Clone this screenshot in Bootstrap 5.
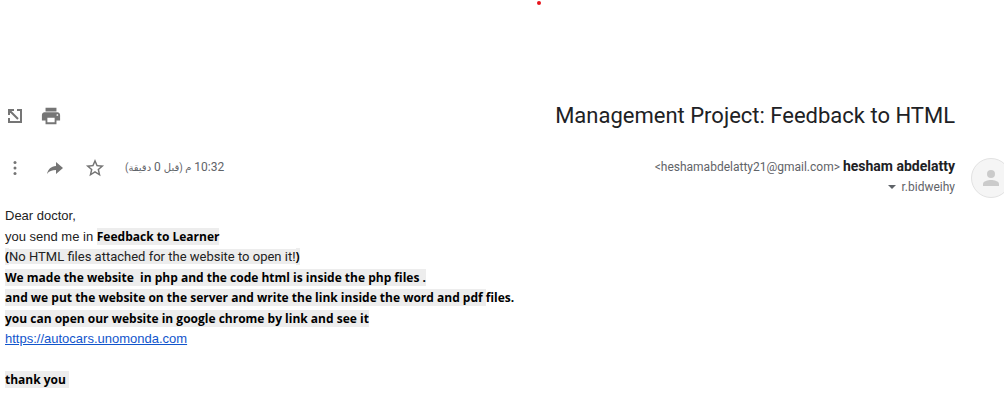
<!DOCTYPE html>
<html lang="en">
<head>
<meta charset="utf-8">
<meta name="viewport" content="width=device-width, initial-scale=1">
<title>Management Project: Feedback to HTML</title>
<link href="https://cdn.jsdelivr.net/npm/bootstrap@5.3.0/dist/css/bootstrap.min.css" rel="stylesheet">
<style>
body { font-family: Roboto, "Liberation Sans", sans-serif; color: #222; background: #fff; }
.top-strip { height: 94px; }
.rec-dot { width: 4px; height: 4px; margin: 1px 0 0 53.5%; background: #e8131c; }
.icon-btn { border: 0; padding: 0; background: none; width: 20px; height: 20px; color: #757575; display: block; }
.icon-btn svg { display: block; }
.tools { gap: 16px; padding-left: 5px; }
.actions { gap: 20px; }
.subject { font-size: 22px; line-height: 28px; color: #202124; }
.title-row { padding: 8px 49px 0 0; }
.meta-row { padding-top: 27px; }
.stamp { font: 12px/20px Roboto, "DejaVu Sans", sans-serif; color: #5f6368; }
.stamp span { font-size: 10px; }
.sender { line-height: 20px; height: 20px; font-size: 12px; color: #5f6368; }
.sender-name { font-size: 14px; line-height: 18px; color: #202124; }
.recipient { border: 0; padding: 0; background: none; font-size: 12px; line-height: 20px; color: #5f6368; }
.avatar { width: 40px; height: 40px; margin: 1px -7px 0 16px; border: 1px solid #e2e2e2; background: #f5f5f5; }
.message { padding: 8px 5px 20px; font: 13px/20px "Liberation Sans", Arial, sans-serif; }
.message p { margin: 0; min-height: 20px; white-space: pre-wrap; }
.message p:nth-child(even) { min-height: 21px; line-height: 21px; }
.message b { font: bold 12px/20px "Open Sans", "Noto Sans", sans-serif; color: #000; }
.hl { background: #ededed; }
.quoted { font: 13px/20px Roboto, sans-serif; }
.message a { color: #1155cc; }
</style>
</head>
<body class="overflow-hidden">
<div class="top-strip overflow-hidden"><div class="rec-dot rounded-circle"></div></div>
<main>
  <header>
    <div class="title-row d-flex justify-content-between align-items-center">
      <div class="tools d-flex">
        <button class="icon-btn" aria-label="Open in new window"><svg width="20" height="20" viewBox="0 0 20 20" fill="none" stroke="currentColor" stroke-width="2"><path d="M12 4h4v12H4v-4M4 9V4h5M4 4l9 9"/></svg></button>
        <button class="icon-btn" aria-label="Print"><svg width="20" height="20" viewBox="1 1 22 22" fill="currentColor"><path d="M19 8H5c-1.660 0-3 1.340-3 3v6h4v4h12v-4h4v-6c0-1.660-1.340-3-3-3zm-3 11H8v-5h8v5zm3-7c-.55 0-1-.45-1-1s.45-1 1-1 1 .45 1 1-.45 1-1 1zm-1-9H6v4h12V3z"/></svg></button>
      </div>
      <h1 class="subject fw-normal m-0">Management Project: Feedback to HTML</h1>
    </div>
    <div class="meta-row d-flex justify-content-between align-items-start">
      <div class="tools actions d-flex align-items-center">
        <button class="icon-btn" aria-label="More"><svg width="20" height="20" viewBox="0 0 20 20" fill="currentColor"><circle cx="10" cy="4.500" r="1.500"/><circle cx="10" cy="10" r="1.500"/><circle cx="10" cy="15.500" r="1.500"/></svg></button>
        <button class="icon-btn" aria-label="Forward"><svg width="20" height="20" viewBox="0 0 20 20" fill="currentColor"><path d="M11 4l7 6-7 6v-4c-4 0-7 1-9 4 1-5 4-7.500 9-8z"/></svg></button>
        <button class="icon-btn" aria-label="Star"><svg width="20" height="20" viewBox="1 1 22 22" fill="currentColor"><path d="M22 9.240l-7.190-.62L12 2 9.190 8.630 2 9.240l5.460 4.730L5.820 21 12 17.270 18.180 21l-1.630-7.030L22 9.240zM12 15.400l-3.760 2.270 1-4.280-3.320-2.880 4.380-.38L12 6.100l1.710 4.040 4.380.38-3.320 2.880 1 4.280L12 15.400z"/></svg></button>
        <time class="stamp" dir="rtl" lang="ar">10:32 <span>م (قبل</span> 0 <span>دقيقة)</span></time>
      </div>
      <div class="d-flex align-items-start">
        <div class="d-flex flex-column align-items-end">
          <div class="sender">&lt;heshamabdelatty21@gmail.com&gt; <strong class="sender-name">hesham abdelatty</strong></div>
          <button class="recipient d-flex align-items-center gap-1"><svg width="10" height="6" viewBox="0 0 10 6" fill="currentColor"><path d="M1 1h8L5 5z"/></svg>r.bidweihy</button>
        </div>
        <div class="avatar rounded-circle flex-shrink-0"><svg class="d-block" width="38" height="38" viewBox="0 0 38 38" fill="#cbcbcb"><circle cx="19" cy="15" r="4"/><path d="M11 27v-2c0-3 5-4 8-4s8 1 8 4v2z"/></svg></div>
      </div>
    </div>
  </header>
  <article class="message">
    <p>Dear doctor,</p>
    <p>you send me in <b class="hl">Feedback to Learner</b></p>
    <p><b class="hl">(</b><span class="hl quoted">No HTML files attached for the website to open it!</span><b class="hl">)</b></p>
    <p><b class="hl">We made the website  in php and the code html is inside the php files .</b></p>
    <p><b><span class="hl">and we put the website on the server and write the link inside the word and pdf </span>files.</b></p>
    <p><b class="hl">you can open our website in google chrome by link and see it</b></p>
    <p><a href="https://autocars.unomonda.com">https://autocars.unomonda.com</a></p>
    <p></p>
    <p><b class="hl">thank you </b></p>
  </article>
</main>
<script src="https://cdn.jsdelivr.net/npm/bootstrap@5.3.0/dist/js/bootstrap.bundle.min.js"></script>
</body>
</html>
